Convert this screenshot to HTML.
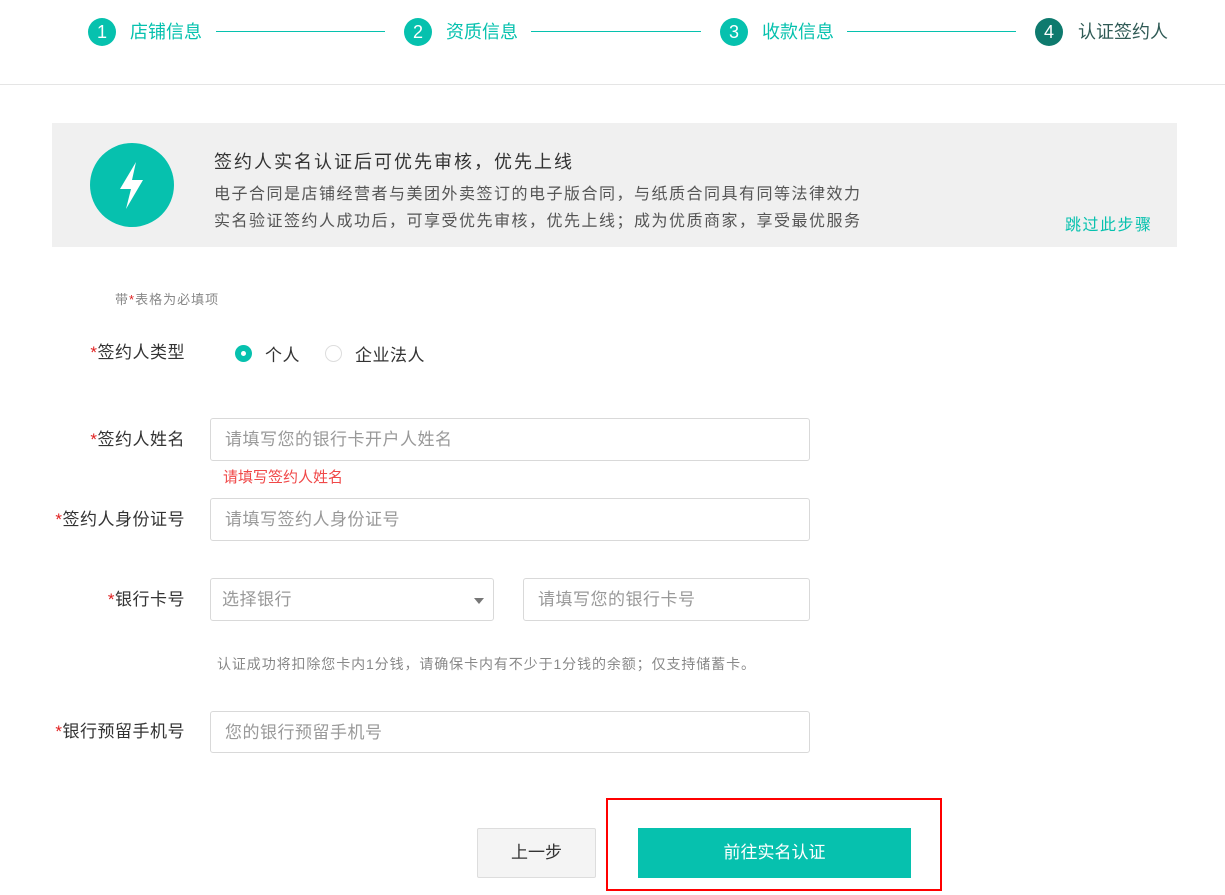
<!DOCTYPE html>
<html><head><meta charset="utf-8"><style>
*{margin:0;padding:0;box-sizing:border-box}
body{width:1225px;height:895px;background:#fff;font-family:"Liberation Sans","Noto Sans CJK SC",sans-serif;position:relative;overflow:hidden;color:#333}
.a{position:absolute;white-space:nowrap}
.c{position:absolute;width:28px;height:28px;border-radius:50%;background:#06c1ae;color:#fff;font-size:18px;line-height:28px;text-align:center;top:18px}
.sl{position:absolute;top:21px;font-size:18px;color:#06c1ae;line-height:22px}
.ln{position:absolute;top:31px;height:1px;border-top:1px solid #06c1ae}
.lab{position:absolute;right:1040px;font-size:17px;color:#333;line-height:22px;text-align:right;white-space:nowrap;letter-spacing:0.5px}
.lab b{color:#e02020;font-weight:normal}
.in{position:absolute;border:1px solid #d9d9d9;border-radius:3px;background:#fff;font-size:17px;color:#999;padding-left:14px;line-height:41px;letter-spacing:0.5px}
</style></head><body>
<div class="c" style="left:88px">1</div><div class="sl" style="left:130px">店铺信息</div>
<div class="ln" style="left:216px;width:169px"></div>
<div class="c" style="left:404px">2</div><div class="sl" style="left:446px">资质信息</div>
<div class="ln" style="left:531px;width:170px"></div>
<div class="c" style="left:720px">3</div><div class="sl" style="left:762px">收款信息</div>
<div class="ln" style="left:847px;width:169px"></div>
<div class="c" style="left:1035px;background:#0e7a6e">4</div><div class="sl" style="left:1078px;color:#2f5a55">认证签约人</div>
<div class="a" style="left:0;top:84px;width:1225px;height:1px;background:#e5e5e5"></div>

<div class="a" style="left:52px;top:123px;width:1125px;height:124px;background:#f0f0f0"></div>
<svg class="a" style="left:90px;top:143px" width="84" height="84" viewBox="0 0 84 84"><circle cx="42" cy="42" r="42" fill="#06c1ae"/><path d="M46 19 L30 46 L41 46 L36 66 L53 37 L42 37 Z" fill="#fff"/></svg>
<div class="a" style="left:214px;top:148px;font-size:18px;letter-spacing:2px;color:#333">签约人实名认证后可优先审核，优先上线</div>
<div class="a" style="left:214px;top:180px;font-size:16px;letter-spacing:1.5px;color:#555">电子合同是店铺经营者与美团外卖签订的电子版合同，与纸质合同具有同等法律效力</div>
<div class="a" style="left:214px;top:207px;font-size:16px;letter-spacing:1.5px;color:#555">实名验证签约人成功后，可享受优先审核，优先上线；成为优质商家，享受最优服务</div>
<div class="a" style="left:1065px;top:211px;font-size:16px;letter-spacing:1.5px;color:#06c1ae">跳过此步骤</div>

<div class="a" style="left:115px;top:289px;font-size:13px;letter-spacing:1px;color:#888">带<span style="color:#e02020">*</span>表格为必填项</div>

<div class="lab" style="top:342px"><b>*</b>签约人类型</div>
<div class="a" style="left:235px;top:345px;width:17px;height:17px;border-radius:50%;background:#06c1ae"><div style="position:absolute;left:6px;top:6px;width:5px;height:5px;border-radius:50%;background:#fff"></div></div>
<div class="a" style="left:265px;top:341px;font-size:17px;letter-spacing:0.5px">个人</div>
<div class="a" style="left:325px;top:345px;width:17px;height:17px;border-radius:50%;border:1px solid #ddd"></div>
<div class="a" style="left:355px;top:341px;font-size:17px;letter-spacing:0.5px">企业法人</div>

<div class="lab" style="top:429px"><b>*</b>签约人姓名</div>
<div class="in" style="left:210px;top:418px;width:600px;height:43px">请填写您的银行卡开户人姓名</div>
<div class="a" style="left:223px;top:466px;font-size:15px;color:#f04848">请填写签约人姓名</div>

<div class="lab" style="top:509px"><b>*</b>签约人身份证号</div>
<div class="in" style="left:210px;top:498px;width:600px;height:43px">请填写签约人身份证号</div>

<div class="lab" style="top:589px"><b>*</b>银行卡号</div>
<div class="in" style="left:210px;top:578px;width:284px;height:43px;padding-left:11px">选择银行<div style="position:absolute;right:9px;top:19px;width:0;height:0;border-left:5px solid transparent;border-right:5px solid transparent;border-top:6px solid #777"></div></div>
<div class="in" style="left:523px;top:578px;width:287px;height:43px">请填写您的银行卡号</div>
<div class="a" style="left:217px;top:654px;font-size:14px;letter-spacing:0.9px;color:#888">认证成功将扣除您卡内1分钱，请确保卡内有不少于1分钱的余额；仅支持储蓄卡。</div>

<div class="lab" style="top:721px"><b>*</b>银行预留手机号</div>
<div class="in" style="left:210px;top:711px;width:600px;height:42px">您的银行预留手机号</div>

<div class="a" style="left:477px;top:828px;width:119px;height:50px;background:#f4f4f4;border:1px solid #ddd;border-radius:2px;font-size:17px;color:#333;text-align:center;line-height:48px">上一步</div>
<div class="a" style="left:606px;top:798px;width:336px;height:93px;border:2px solid #f00"></div>
<div class="a" style="left:638px;top:828px;width:273px;height:50px;background:#06c1ae;color:#fff;font-size:17px;text-align:center;line-height:50px">前往实名认证</div>
</body></html>
